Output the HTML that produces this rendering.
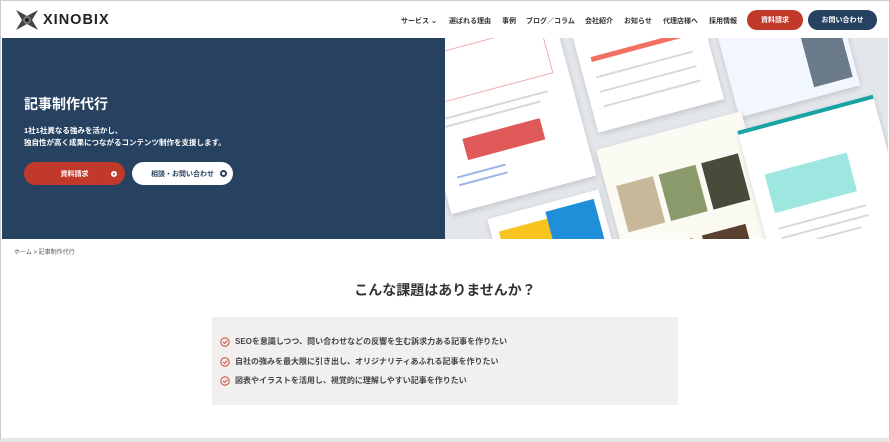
<!DOCTYPE html>
<html><head><meta charset="utf-8"><style>
*{margin:0;padding:0;box-sizing:border-box}
body{width:890px;height:442px;overflow:hidden;background:#fff;font-family:"Liberation Sans","Noto Sans CJK JP",sans-serif;position:relative;color:#333}
.frame{position:absolute;left:0;top:0;width:890px;height:442px;border:1px solid #ccc;border-bottom:4px solid #e6e6e6}
.hdr{position:absolute;left:1px;top:1px;width:888px;height:37px;background:#fff}
.logo{position:absolute;left:15px;top:9px;display:flex;align-items:center}
.logo span{font-weight:bold;font-size:14.5px;letter-spacing:1px;color:#222;margin-left:5px}
.nav{position:absolute;top:15px;font-size:7px;font-weight:bold;color:#333;white-space:nowrap}
.btn{position:absolute;border-radius:12px;color:#fff;font-size:7px;font-weight:bold;display:flex;align-items:center;justify-content:center}
.hero{position:absolute;left:2px;top:38px;width:443px;height:201px;background:#264260}
.img{position:absolute;left:445px;top:38px;width:443px;height:201px;background:#e3e6ea;overflow:hidden}
.card{position:absolute;background:#fff;box-shadow:0 2px 6px rgba(0,0,0,.15);transform:rotate(-15deg)}
.ln{position:absolute;height:2px;background:#d6d9de}
.hl{position:absolute;color:#fff}
.box{position:absolute;left:212px;top:317px;width:466px;height:88px;background:#f2f0ee}
.it{position:absolute;left:8px;font-size:8px;font-weight:bold;color:#444;display:flex;align-items:center;white-space:nowrap}
.it svg{margin-right:5px}
</style></head><body>
<div class="hdr">
 <div class="logo"><svg width="22" height="20" viewBox="0 0 22 20"><path d="M0 0 L11 6 L22 0 L16 10 L22 20 L11 14 L0 20 L6 10Z" fill="#444"/><circle cx="11" cy="10" r="4" fill="#777"/><circle cx="11" cy="10" r="2" fill="#222"/></svg><span>XINOBIX</span></div>
 <div class="nav" style="left:400px">サービス ⌄</div>
 <div class="nav" style="left:448px">選ばれる理由</div>
 <div class="nav" style="left:501px">事例</div>
 <div class="nav" style="left:525px">ブログ／コラム</div>
 <div class="nav" style="left:584px">会社紹介</div>
 <div class="nav" style="left:623px">お知らせ</div>
 <div class="nav" style="left:662px">代理店様へ</div>
 <div class="nav" style="left:708px">採用情報</div>
 <div class="btn" style="left:746px;top:9px;width:56px;height:20px;background:#c0392b">資料請求</div>
 <div class="btn" style="left:807px;top:9px;width:69px;height:20px;background:#264260">お問い合わせ</div>
</div>
<div class="hero">
 <div class="hl" style="left:22px;top:56px;font-size:14px;font-weight:bold">記事制作代行</div>
 <div class="hl" style="left:22px;top:87px;font-size:7.5px;line-height:12px;font-weight:bold">1社1社異なる強みを活かし、<br>独自性が高く成果につながるコンテンツ制作を支援します。</div>
 <div class="btn" style="left:22px;top:124px;width:101px;height:23px;background:#c0392b;border-radius:12px">資料請求<span style="position:absolute;right:8px;width:6px;height:6px;border:2px solid #fff;border-radius:50%"></span></div>
 <div class="btn" style="left:130px;top:124px;width:101px;height:23px;background:#fff;color:#264260">相談・お問い合わせ<span style="position:absolute;right:6px;width:7px;height:7px;border:2px solid #264260;border-radius:50%"></span></div>
</div>
<div class="img">
 <div class="card" style="left:-20px;top:-25px;width:150px;height:185px">
  <div style="position:absolute;left:15px;top:25px;width:120px;height:50px;border:1px solid #f0b0b0"></div>
  <div class="ln" style="left:15px;top:90px;width:110px"></div><div class="ln" style="left:15px;top:98px;width:100px"></div>
  <div style="position:absolute;left:30px;top:115px;width:80px;height:22px;background:#e05a5a"></div>
  <div class="ln" style="left:15px;top:150px;width:50px;background:#9bb4e8"></div><div class="ln" style="left:15px;top:158px;width:50px;background:#9bb4e8"></div>
 </div>
 <div class="card" style="left:135px;top:-45px;width:130px;height:125px">
  <div style="position:absolute;left:12px;top:50px;width:95px;height:5px;background:#f27060"></div>
  <div class="ln" style="left:12px;top:70px;width:100px"></div><div class="ln" style="left:12px;top:85px;width:100px"></div><div class="ln" style="left:12px;top:100px;width:100px"></div>
 </div>
 <div class="card" style="left:280px;top:-30px;width:125px;height:95px;background:#f2f6ff">
  <div style="position:absolute;left:80px;top:25px;width:40px;height:60px;background:#6a7a8a"></div>
 </div>
 <div class="card" style="left:168px;top:90px;width:150px;height:150px;background:#fbfaf3">
  <div style="position:absolute;left:10px;top:40px;width:38px;height:48px;background:#c9b79a"></div>
  <div style="position:absolute;left:54px;top:40px;width:38px;height:48px;background:#8a9a6a"></div>
  <div style="position:absolute;left:98px;top:40px;width:38px;height:48px;background:#4a4a3a"></div>
  <div style="position:absolute;left:30px;top:110px;width:40px;height:38px;background:#8c6a50"></div>
  <div style="position:absolute;left:80px;top:110px;width:45px;height:38px;background:#5a4030"></div>
 </div>
 <div class="card" style="left:312px;top:72px;width:140px;height:170px;border-top:4px solid #1aa3a3">
  <div style="position:absolute;left:15px;top:45px;width:85px;height:40px;background:#9ee6e0"></div>
  <div class="ln" style="left:15px;top:100px;width:90px"></div><div class="ln" style="left:15px;top:110px;width:90px"></div><div class="ln" style="left:15px;top:120px;width:80px"></div>
 </div>
 <div class="card" style="left:50px;top:165px;width:115px;height:75px">
  <div style="position:absolute;left:8px;top:15px;width:50px;height:45px;background:#f7c51e"></div>
  <div style="position:absolute;left:58px;top:8px;width:50px;height:50px;background:#1e8fd8"></div>
 </div>
</div>
<div style="position:absolute;left:14px;top:247px;font-size:6px;color:#555">ホーム &gt; 記事制作代行</div>
<div style="position:absolute;left:0;width:890px;top:280px;text-align:center;font-size:14px;font-weight:bold;color:#333">こんな課題はありませんか？</div>
<div class="box">
 <div class="it" style="top:19px"><svg width="10" height="10" viewBox="0 0 10 10"><circle cx="5" cy="5" r="4.2" fill="none" stroke="#d0564a" stroke-width="1.1"/><path d="M3 5 L4.6 6.5 L7.3 3.6" fill="none" stroke="#d0564a" stroke-width="1.1"/></svg>SEOを意識しつつ、問い合わせなどの反響を生む訴求力ある記事を作りたい</div>
 <div class="it" style="top:39px"><svg width="10" height="10" viewBox="0 0 10 10"><circle cx="5" cy="5" r="4.2" fill="none" stroke="#d0564a" stroke-width="1.1"/><path d="M3 5 L4.6 6.5 L7.3 3.6" fill="none" stroke="#d0564a" stroke-width="1.1"/></svg>自社の強みを最大限に引き出し、オリジナリティあふれる記事を作りたい</div>
 <div class="it" style="top:58px"><svg width="10" height="10" viewBox="0 0 10 10"><circle cx="5" cy="5" r="4.2" fill="none" stroke="#d0564a" stroke-width="1.1"/><path d="M3 5 L4.6 6.5 L7.3 3.6" fill="none" stroke="#d0564a" stroke-width="1.1"/></svg>図表やイラストを活用し、視覚的に理解しやすい記事を作りたい</div>
</div>
<div class="frame"></div>
</body></html>
